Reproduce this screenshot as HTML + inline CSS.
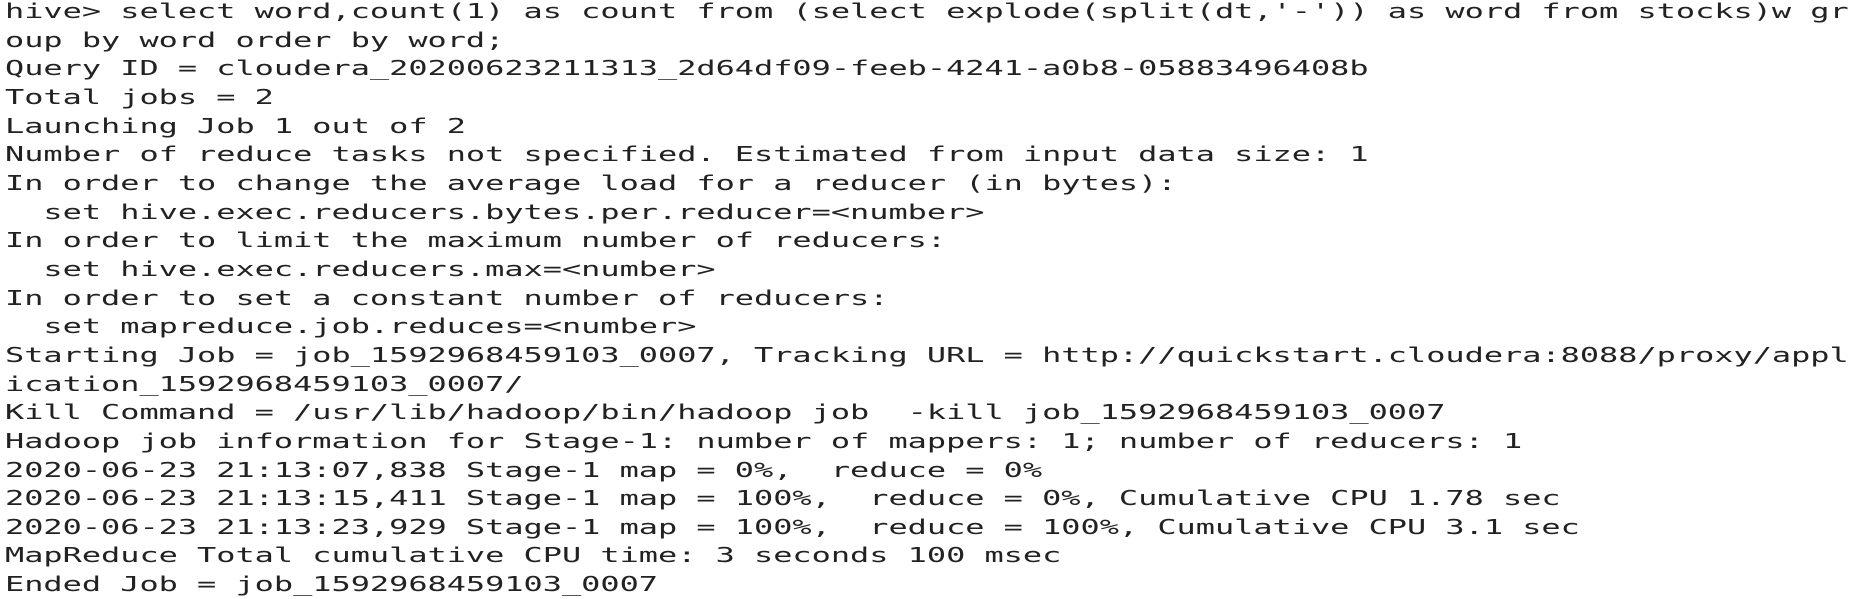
<!DOCTYPE html>
<html><head><meta charset="utf-8"><style>
html,body{margin:0;padding:0;background:#fff;width:1866px;height:576px;overflow:hidden}
pre{margin:0;position:absolute;left:5px;top:-3px;font-family:"DejaVu Sans Mono","Liberation Mono",monospace;font-size:20px;line-height:28.65px;color:#222;transform:scaleX(1.595);transform-origin:0 0;white-space:pre}
</style></head><body><pre>hive&gt; select word,count(1) as count from (select explode(split(dt,'-')) as word from stocks)w gr
oup by word order by word;
Query ID = cloudera_20200623211313_2d64df09-feeb-4241-a0b8-05883496408b
Total jobs = 2
Launching Job 1 out of 2
Number of reduce tasks not specified. Estimated from input data size: 1
In order to change the average load for a reducer (in bytes):
  set hive.exec.reducers.bytes.per.reducer=&lt;number&gt;
In order to limit the maximum number of reducers:
  set hive.exec.reducers.max=&lt;number&gt;
In order to set a constant number of reducers:
  set mapreduce.job.reduces=&lt;number&gt;
Starting Job = job_1592968459103_0007, Tracking URL = http://quickstart.cloudera:8088/proxy/appl
ication_1592968459103_0007/
Kill Command = /usr/lib/hadoop/bin/hadoop job  -kill job_1592968459103_0007
Hadoop job information for Stage-1: number of mappers: 1; number of reducers: 1
2020-06-23 21:13:07,838 Stage-1 map = 0%,  reduce = 0%
2020-06-23 21:13:15,411 Stage-1 map = 100%,  reduce = 0%, Cumulative CPU 1.78 sec
2020-06-23 21:13:23,929 Stage-1 map = 100%,  reduce = 100%, Cumulative CPU 3.1 sec
MapReduce Total cumulative CPU time: 3 seconds 100 msec
Ended Job = job_1592968459103_0007</pre></body></html>
